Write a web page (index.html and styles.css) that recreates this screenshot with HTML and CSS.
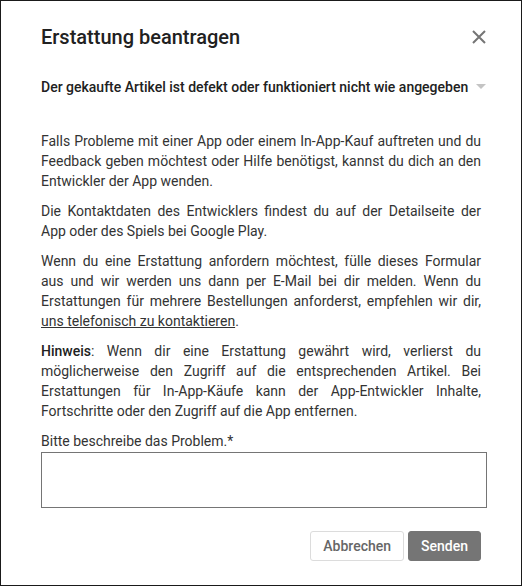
FILE: index.html
```html
<!DOCTYPE html>
<html lang="de">
<head>
    <meta charset="UTF-8">
    <meta name="viewport" content="width=device-width, initial-scale=1.0">
    <title>Erstattung beantragen</title>
    <link rel="stylesheet" href="styles.css">
</head>
<body>
    <div class="refund-dialog">
        <div class="dialog-header">
            <h1>Erstattung beantragen</h1>
            <button type="button" class="close-btn" aria-label="Schließen">
                <svg width="14" height="14" viewBox="0 0 14 14">
                    <path d="M1 1 L13 13 M13 1 L1 13" stroke="#757575" stroke-width="2" fill="none"/>
                </svg>
            </button>
        </div>

        <div class="reason-select">
            <span class="reason-text">Der gekaufte Artikel ist defekt oder funktioniert nicht wie angegeben</span>
            <span class="arrow"></span>
        </div>

        <div class="dialog-body">
            <p>Falls Probleme mit einer App oder einem In-App-Kauf auftreten und du Feedback geben möchtest oder Hilfe benötigst, kannst du dich an den Entwickler der App wenden.</p>
            <p>Die Kontaktdaten des Entwicklers findest du auf der Detailseite der App oder des Spiels bei Google Play.</p>
            <p>Wenn du eine Erstattung anfordern möchtest, fülle dieses Formular aus und wir werden uns dann per E-Mail bei dir melden. Wenn du Erstattungen für mehrere Bestellungen anforderst, empfehlen wir dir, <a href="#">uns telefonisch zu kontaktieren</a>.</p>
            <p><strong>Hinweis</strong>: Wenn dir eine Erstattung gewährt wird, verlierst du möglicherweise den Zugriff auf die entsprechenden Artikel. Bei Erstattungen für In-App-Käufe kann der App-Entwickler Inhalte, Fortschritte oder den Zugriff auf die App entfernen.</p>

            <label for="problem">Bitte beschreibe das Problem.*</label>
            <textarea id="problem" name="problem"></textarea>
        </div>

        <div class="dialog-actions">
            <button type="button" class="btn btn-cancel">Abbrechen</button>
            <button type="submit" class="btn btn-send">Senden</button>
        </div>
    </div>
</body>
</html>
```

FILE: styles.css
```css
* {
    box-sizing: border-box;
}

body {
    margin: 0;
    font-family: Roboto, 'Liberation Sans', sans-serif;
    color: #333;
    background: #fff;
}

.refund-dialog {
    width: 522px;
    height: 586px;
    border: 1px solid #1a1a1a;
    padding: 24px 40px 0 40px;
}

.dialog-header {
    display: flex;
    justify-content: space-between;
    align-items: center;
    height: 24px;
}

.dialog-header h1 {
    margin: 0;
    font-size: 20px;
    line-height: 24px;
    font-weight: 500;
    color: #212121;
}

.close-btn {
    border: none;
    background: none;
    padding: 0;
    margin-right: -5px;
    width: 14px;
    height: 14px;
    cursor: pointer;
    display: flex;
}

/* the arrow hangs a little past the text column */
.reason-select {
    display: flex;
    align-items: center;
    margin-top: 28px;
    margin-right: -10px;
    font-size: 14px;
    line-height: 20px;
    font-weight: 500;
    color: #212121;
    white-space: nowrap;
}

.reason-select .arrow {
    margin-left: 8px;
    margin-top: -2px;
    width: 0;
    height: 0;
    border-left: 5px solid transparent;
    border-right: 5px solid transparent;
    border-top: 5px solid #c4c4c4;
}

.dialog-body {
    margin-top: 34px;
    font-size: 14px;
    line-height: 20px;
}

.dialog-body p {
    margin: 0 0 10px 0;
    text-align: justify;
}

.dialog-body a {
    color: #333;
    text-decoration: underline;
}

.dialog-body strong {
    font-weight: 500;
    color: #212121;
}

.dialog-body label {
    display: block;
    margin-bottom: 1px;
}

.dialog-body textarea {
    display: block;
    width: 446px;
    height: 56px;
    border: 1px solid #757575;
    border-radius: 0;
    resize: none;
    font-family: inherit;
    font-size: 14px;
}

.dialog-actions {
    display: flex;
    justify-content: flex-end;
    gap: 4px;
    margin-top: 23px;
}

.btn {
    height: 30px;
    padding: 0 12px;
    border-radius: 3px;
    font-family: inherit;
    font-size: 14px;
    font-weight: 500;
    cursor: pointer;
}

.btn-cancel {
    background: #fff;
    border: 1px solid #dcdcdc;
    color: #666;
}

.btn-send {
    background: #757575;
    border: 1px solid #757575;
    color: #fff;
}
```
